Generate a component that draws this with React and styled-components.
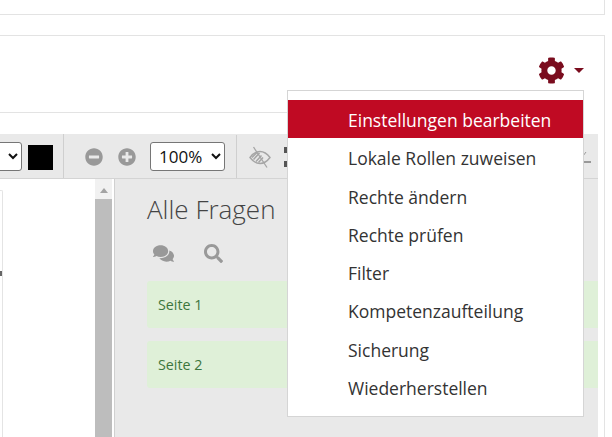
import React from 'react';
import styled, { createGlobalStyle } from 'styled-components';
import { FaCog, FaComments, FaMinusCircle, FaPlusCircle, FaSearch } from 'react-icons/fa';

const menuItems = [
  'Einstellungen bearbeiten',
  'Lokale Rollen zuweisen',
  'Rechte ändern',
  'Rechte prüfen',
  'Filter',
  'Kompetenzaufteilung',
  'Sicherung',
  'Wiederherstellen',
];

const Global = createGlobalStyle`
  html, body {
    margin: 0;
    height: 100%;
    overflow: hidden;
    background: #fff;
  }
  body {
    font-family: "Open Sans", "Noto Sans", sans-serif;
  }
`;

const Page = styled.div`
  position: relative;
  width: 612px;
  height: 437px;
  overflow: hidden;
`;

const TopCard = styled.div`
  box-sizing: border-box;
  width: 605px;
  height: 15px;
  border-right: 1px solid #e3e3e3;
  border-bottom: 1px solid #e3e3e3;
`;

const MainCard = styled.div`
  box-sizing: border-box;
  width: 605px;
  height: 402px;
  margin-top: 20px;
  padding-right: 6px;
  border-top: 1px solid #e3e3e3;
  border-right: 1px solid #e3e3e3;
`;

const Header = styled.div`
  position: relative;
  width: 500px;
  height: 76px;
  border-bottom: 1px solid #e3e3e3;
`;

const ActionIcons = styled.div`
  position: absolute;
  left: 538px;
  top: 21px;
  display: flex;
  align-items: center;
  gap: 9px;
  color: #7a0c1e;
`;

const Caret = styled.span`
  width: 0;
  height: 0;
  border-left: 5.5px solid transparent;
  border-right: 5.5px solid transparent;
  border-top: 5px solid #7a0c1e;
`;

const Toolbar = styled.div`
  display: flex;
  align-items: center;
  height: 44px;
  margin-top: 21px;
  background: #e9e9e9;
  border-bottom: 1px solid #d4d4d4;
  overflow: hidden;
`;

const Select = styled.select`
  flex: none;
  box-sizing: border-box;
  height: 29px;
  width: ${props => props.$width}px;
  margin-left: ${props => props.$offset || 0}px;
  padding: 0 0 0 4px;
  font: 17px "Open Sans", sans-serif;
  color: #111;
  background: #fff;
  border: 1px solid #767676;
  border-radius: 3px;
`;

const Swatch = styled.span`
  flex: none;
  width: 25px;
  height: 25px;
  margin: 2px 10px 0 6px;
  background: #000;
`;

const Divider = styled.span`
  flex: none;
  width: 1px;
  height: 44px;
  background: #cfcfcf;
`;

const ToolIcon = styled.span`
  display: flex;
  flex: none;
  margin: 1px ${props => props.$right || 0}px 0 ${props => props.$left || 0}px;
  color: #999;
`;

const TrailingIcon = styled(ToolIcon)`
  margin-left: auto;
  margin-right: 6px;
`;

const Workspace = styled.div`
  display: flex;
  height: 259px;
`;

const Canvas = styled.div`
  flex: none;
  width: 95px;
  padding-top: 11px;
  background: #fff;
`;

const Sheet = styled.div`
  box-sizing: border-box;
  width: 3px;
  height: 248px;
  padding-top: 80px;
  border-top: 1px solid #e4e4e4;
  border-right: 1px solid #e4e4e4;
  border-top-right-radius: 2px;
`;

const Tick = styled.div`
  width: 2px;
  height: 5px;
  background: #666;
`;

const Scrollbar = styled.div`
  display: flex;
  flex-direction: column;
  align-items: center;
  flex: none;
  width: 17px;
  background: #f1f1f1;
`;

const ScrollArrow = styled.span`
  width: 0;
  height: 0;
  margin: 9px 0 6px;
  border-left: 4.5px solid transparent;
  border-right: 4.5px solid transparent;
  border-bottom: 5px solid #a3a3a3;
`;

const ScrollThumb = styled.div`
  flex: 1;
  width: 100%;
  background: #bdbdbd;
`;

const Panel = styled.div`
  flex: 1;
  margin-left: 2px;
  padding: 12px 0 0 32px;
  background: #e9e9e9;
  border-left: 1px solid #d0d0d0;
`;

const PanelTitle = styled.h2`
  margin: 0;
  font-size: 26px;
  font-weight: 300;
  line-height: 36px;
  color: #444;
`;

const PanelActions = styled.div`
  display: flex;
  align-items: center;
  gap: 30px;
  height: 26px;
  margin: 13px 0 15px 6px;
  color: #999;
`;

const PageCard = styled.div`
  box-sizing: border-box;
  height: 47px;
  margin-bottom: 13px;
  padding-left: 11px;
  line-height: 48px;
  font-size: 14.3px;
  color: #3c763d;
  background: #dff0d8;
  border-radius: 3px 0 0 3px;
`;

const Menu = styled.ul`
  position: absolute;
  left: 287px;
  top: 90px;
  box-sizing: border-box;
  width: 297px;
  height: 327px;
  margin: 0;
  padding: 9px 0 0;
  list-style: none;
  background: #fff;
  border: 1px solid #d5d5d5;
`;

const MenuItem = styled.li`
  height: 38.3px;
  padding-left: 60px;
  font-size: 17.5px;
  line-height: 40px;
  color: ${props => (props.$active ? '#fff' : '#333')};
  background: ${props => (props.$active ? '#c00a23' : 'transparent')};
`;

const HatchedEye = () => (
  <svg width="22" height="22" viewBox="0 0 22 22" fill="none" stroke="#a5a5a5">
    <path d="M1 11.5C4 7.5 7.5 5.5 11 5.5s7 2 10 6c-3 4-6.500 6-10 6s-7-2-10-6z" strokeWidth="1.4" />
    <path
      d="M3 11.500 8 6.500M4.500 13.500 10.500 7M7 15.500 12.500 9.500M9.500 16.500 14 11.500"
      strokeWidth="1.5"
    />
    <path d="M4.500 1 18 21.500" strokeWidth="1.3" />
  </svg>
);

const FullscreenIcon = () => (
  <svg width="20" height="20" viewBox="0 0 20 20" fill="#555">
    <rect x="0" y="0" width="6" height="6" />
    <rect x="0" y="14" width="6" height="6" />
    <rect x="14" y="0" width="6" height="6" />
    <rect x="14" y="14" width="6" height="6" />
  </svg>
);

const ExportIcon = () => (
  <svg width="9" height="12" viewBox="0 0 9 12" fill="none" stroke="#999">
    <path d="M0 11h8" strokeWidth="2" />
    <path d="M0 5 3 1" strokeWidth="1" />
  </svg>
);

const App = () => (
  <Page>
    <Global />
    <TopCard />
    <MainCard>
      <Header>
        <ActionIcons>
          <FaCog size={27} />
          <Caret />
        </ActionIcons>
      </Header>
      <Toolbar>
        <Select $width={62} $offset={-40} defaultValue="a">
          <option value="a"> </option>
        </Select>
        <Swatch />
        <Divider />
        <ToolIcon $left={21}>
          <FaMinusCircle size={18} />
        </ToolIcon>
        <ToolIcon $left={15} $right={14}>
          <FaPlusCircle size={18} />
        </ToolIcon>
        <Select $width={75} defaultValue="100">
          <option value="100">100%</option>
        </Select>
        <ToolIcon $left={11}>
          <Divider />
        </ToolIcon>
        <ToolIcon $left={12}>
          <HatchedEye />
        </ToolIcon>
        <ToolIcon $left={13}>
          <FullscreenIcon />
        </ToolIcon>
        <TrailingIcon>
          <ExportIcon />
        </TrailingIcon>
      </Toolbar>
      <Workspace>
        <Canvas>
          <Sheet>
            <Tick />
          </Sheet>
        </Canvas>
        <Scrollbar>
          <ScrollArrow />
          <ScrollThumb />
        </Scrollbar>
        <Panel>
          <PanelTitle>Alle Fragen</PanelTitle>
          <PanelActions>
            <FaComments size={21} />
            <FaSearch size={19} />
          </PanelActions>
          <PageCard>Seite 1</PageCard>
          <PageCard>Seite 2</PageCard>
        </Panel>
      </Workspace>
    </MainCard>
    <Menu>
      {menuItems.map((item, index) => (
        <MenuItem key={item} $active={index === 0}>
          {item}
        </MenuItem>
      ))}
    </Menu>
  </Page>
);

export default App;
